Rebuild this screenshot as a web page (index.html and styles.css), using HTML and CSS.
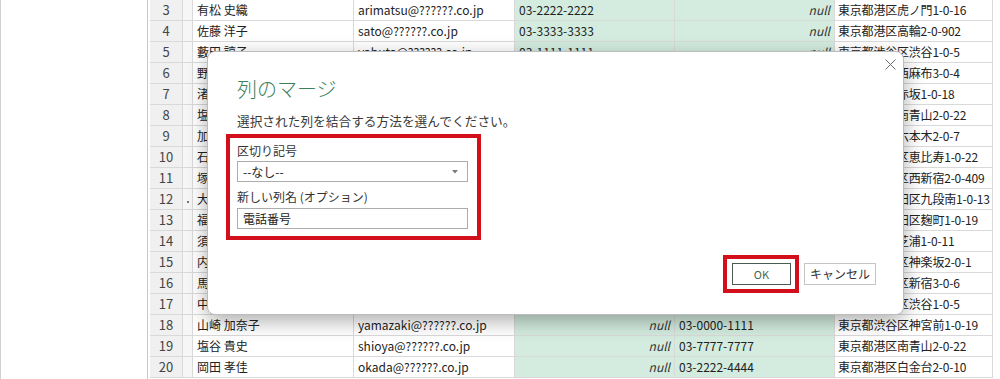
FILE: index.html
```html
<!DOCTYPE html>
<html lang="ja">
<head>
<meta charset="utf-8">
<title>列のマージ</title>
<link rel="stylesheet" href="styles.css">
</head>
<body>
<div class="app">
  <div class="side"></div>
  <div class="pane">
    <div class="table">
      <div class="row"><div class="c num">3</div><div class="c sel"></div><div class="c">有松 史織</div><div class="c">arimatsu@??????.co.jp</div><div class="c g">03-2222-2222</div><div class="c g nul">null</div><div class="c addr">東京都港区虎ノ門1-0-16</div></div>
      <div class="row"><div class="c num">4</div><div class="c sel"></div><div class="c">佐藤 洋子</div><div class="c">sato@??????.co.jp</div><div class="c g">03-3333-3333</div><div class="c g nul">null</div><div class="c addr">東京都港区高輪2-0-902</div></div>
      <div class="row"><div class="c num">5</div><div class="c sel"></div><div class="c">藪田 諒子</div><div class="c">yabuta@??????.co.jp</div><div class="c g">03-1111-1111</div><div class="c g nul">null</div><div class="c addr">東京都渋谷区渋谷1-0-5</div></div>
      <div class="row"><div class="c num">6</div><div class="c sel"></div><div class="c">野口 真理</div><div class="c">noguchi@??????.co.jp</div><div class="c g">03-5555-5555</div><div class="c g nul">null</div><div class="c addr">東京都港区西麻布3-0-4</div></div>
      <div class="row"><div class="c num">7</div><div class="c sel"></div><div class="c">渚 由美</div><div class="c">nagisa@??????.co.jp</div><div class="c g">03-6666-6666</div><div class="c g nul">null</div><div class="c addr">東京都港区赤坂1-0-18</div></div>
      <div class="row"><div class="c num">8</div><div class="c sel"></div><div class="c">塩田 健</div><div class="c">shiota@??????.co.jp</div><div class="c g">03-7777-1111</div><div class="c g nul">null</div><div class="c addr">東京都港区南青山2-0-22</div></div>
      <div class="row"><div class="c num">9</div><div class="c sel"></div><div class="c">加藤 拓也</div><div class="c">kato@??????.co.jp</div><div class="c g">03-8888-8888</div><div class="c g nul">null</div><div class="c addr">東京都港区六本木2-0-7</div></div>
      <div class="row"><div class="c num">10</div><div class="c sel"></div><div class="c">石井 翔</div><div class="c">ishii@??????.co.jp</div><div class="c g">03-9999-9999</div><div class="c g nul">null</div><div class="c addr">東京都渋谷区恵比寿1-0-22</div></div>
      <div class="row"><div class="c num">11</div><div class="c sel"></div><div class="c">塚本 彩</div><div class="c">tsukamoto@??????.co.jp</div><div class="c g">03-1234-5678</div><div class="c g nul">null</div><div class="c addr">東京都新宿区西新宿2-0-409</div></div>
      <div class="row"><div class="c num">12</div><div class="c sel"><span class="dot"></span></div><div class="c">大野 誠</div><div class="c">ono@??????.co.jp</div><div class="c g">03-2345-6789</div><div class="c g nul">null</div><div class="c addr">東京都千代田区九段南1-0-13</div></div>
      <div class="row"><div class="c num">13</div><div class="c sel"></div><div class="c">福田 恵</div><div class="c">fukuda@??????.co.jp</div><div class="c g">03-3456-7890</div><div class="c g nul">null</div><div class="c addr">東京都千代田区麹町1-0-19</div></div>
      <div class="row"><div class="c num">14</div><div class="c sel"></div><div class="c">須藤 学</div><div class="c">sudo@??????.co.jp</div><div class="c g">03-4567-8901</div><div class="c g nul">null</div><div class="c addr">東京都港区芝浦1-0-11</div></div>
      <div class="row"><div class="c num">15</div><div class="c sel"></div><div class="c">内田 涼</div><div class="c">uchida@??????.co.jp</div><div class="c g">03-5678-9012</div><div class="c g nul">null</div><div class="c addr">東京都新宿区神楽坂2-0-1</div></div>
      <div class="row"><div class="c num">16</div><div class="c sel"></div><div class="c">馬場 聡</div><div class="c">baba@??????.co.jp</div><div class="c g">03-6789-0123</div><div class="c g nul">null</div><div class="c addr">東京都新宿区新宿3-0-6</div></div>
      <div class="row"><div class="c num">17</div><div class="c sel"></div><div class="c">中村 紀子</div><div class="c">nakamura@??????.co.jp</div><div class="c g">03-7890-1234</div><div class="c g nul">null</div><div class="c addr">東京都渋谷区渋谷1-0-5</div></div>
      <div class="row"><div class="c num">18</div><div class="c sel"></div><div class="c">山崎 加奈子</div><div class="c">yamazaki@??????.co.jp</div><div class="c g nul">null</div><div class="c g">03-0000-1111</div><div class="c addr">東京都渋谷区神宮前1-0-19</div></div>
      <div class="row"><div class="c num">19</div><div class="c sel"></div><div class="c">塩谷 貴史</div><div class="c">shioya@??????.co.jp</div><div class="c g nul">null</div><div class="c g">03-7777-7777</div><div class="c addr">東京都港区南青山2-0-22</div></div>
      <div class="row"><div class="c num">20</div><div class="c sel"></div><div class="c">岡田 孝佳</div><div class="c">okada@??????.co.jp</div><div class="c g nul">null</div><div class="c g">03-2222-4444</div><div class="c addr">東京都港区白金台2-0-10</div></div>
    </div>
  </div>
</div>

<div class="dialog">
  <svg class="close" width="11" height="11" viewBox="0 0 11 11"><path d="M0.5 0.5 L10.5 10.5 M10.5 0.5 L0.5 10.5" stroke="#6f6f6f" stroke-width="1" fill="none"/></svg>
  <div class="title">列のマージ</div>
  <div class="sub">選択された列を結合する方法を選んでください。</div>
  <div class="hl fields">
    <div class="label">区切り記号</div>
    <div class="select"><span>--なし--</span><svg class="arrow" width="6" height="4" viewBox="0 0 6 4"><path d="M0 0 L6 0 L3 3.5 Z" fill="#7a7a7a"/></svg></div>
    <div class="label second">新しい列名 (オプション)</div>
    <div class="input">電話番号</div>
  </div>
  <div class="buttons">
    <div class="hl okwrap"><div class="btn ok">OK</div></div>
    <div class="btn cancel">キャンセル</div>
  </div>
</div>
</body>
</html>
```

FILE: styles.css
```css
html, body {
  margin: 0;
  padding: 0;
  background: #ffffff;
}
body {
  font-family: "Noto Sans CJK JP", "Noto Sans", sans-serif;
  font-size: 12px;
  color: #222222;
  width: 1000px;
  height: 379px;
  overflow: hidden;
  position: relative;
}
.app {
  display: flex;
  height: 379px;
}
.side {
  width: 147px;
  border-left: 1px solid #d0d0d0;
  box-sizing: border-box;
}
.pane {
  border-left: 1px solid #c8c8c8;
  padding-left: 2px;
  flex: 1;
}
.table {
  display: flex;
  flex-direction: column;
}
.row {
  display: grid;
  grid-template-columns: 33px 10px 161px 161px 160px 160px 158px;
  height: 21px;
}
.c {
  box-sizing: border-box;
  border-right: 1px solid #d9d9d9;
  border-bottom: 1px solid #d9d9d9;
  line-height: 20px;
  padding-left: 4px;
  white-space: nowrap;
  overflow: hidden;
}
.addr {
  padding-left: 3px;
  letter-spacing: -0.2px;
}
.num {
  background: #f0f0f0;
  color: #444444;
  text-align: center;
  padding-left: 0;
  font-size: 13px;
}
.sel {
  background: #f6f6f6;
  padding-left: 0;
  position: relative;
}
.dot {
  position: absolute;
  left: 4px;
  top: 12px;
  width: 2px;
  height: 2px;
  background: #777777;
}
.g {
  background: #d3ecdf;
}
.nul {
  font-style: italic;
  text-align: right;
  padding-right: 4px;
  color: #333333;
}

.dialog {
  position: absolute;
  left: 207px;
  top: 51px;
  width: 697px;
  height: 264px;
  box-sizing: border-box;
  background: #ffffff;
  border: 1px solid #bcbcbc;
  border-radius: 8px;
  box-shadow: 0 6px 20px rgba(0, 0, 0, 0.32);
  padding: 0 27px 21px 29px;
  display: flex;
  flex-direction: column;
  align-items: flex-start;
}
.close {
  position: absolute;
  right: 7px;
  top: 7px;
}
.title {
  margin-top: 23px;
  font-size: 20px;
  line-height: 28px;
  font-weight: 300;
  color: #3a805c;
}
.sub {
  margin-top: 9px;
  font-size: 12.7px;
  line-height: 18px;
  color: #3a3a3a;
}
.hl {
  border: 4px solid #d20f1a;
}
.fields {
  margin-top: 4px;
  margin-left: -11px;
  padding: 4px 9px 7px 7px;
  width: 231px;
}
.label {
  line-height: 18px;
  color: #333333;
}
.label.second {
  margin-top: 6px;
}
.select, .input {
  box-sizing: border-box;
  height: 21px;
  width: 231px;
  border: 1px solid #acacac;
  line-height: 19px;
  padding-left: 5px;
  color: #222222;
}
.select {
  margin-top: 1px;
  display: flex;
  align-items: center;
  justify-content: space-between;
  padding-right: 9px;
}
.input {
  margin-top: 2px;
}
.buttons {
  margin-top: auto;
  align-self: flex-end;
  display: flex;
  align-items: center;
  gap: 5px;
}
.okwrap {
  padding: 4px 4px 4px 5px;
}
.btn {
  box-sizing: border-box;
  height: 22px;
  line-height: 20px;
  text-align: center;
  font-size: 11px;
}
.ok {
  width: 59px;
  border: 1px solid #4b5d52;
  color: #3f6a50;
}
.cancel {
  width: 72px;
  border: 1px solid #c4c4c4;
  color: #333333;
  font-size: 12px;
}
```
